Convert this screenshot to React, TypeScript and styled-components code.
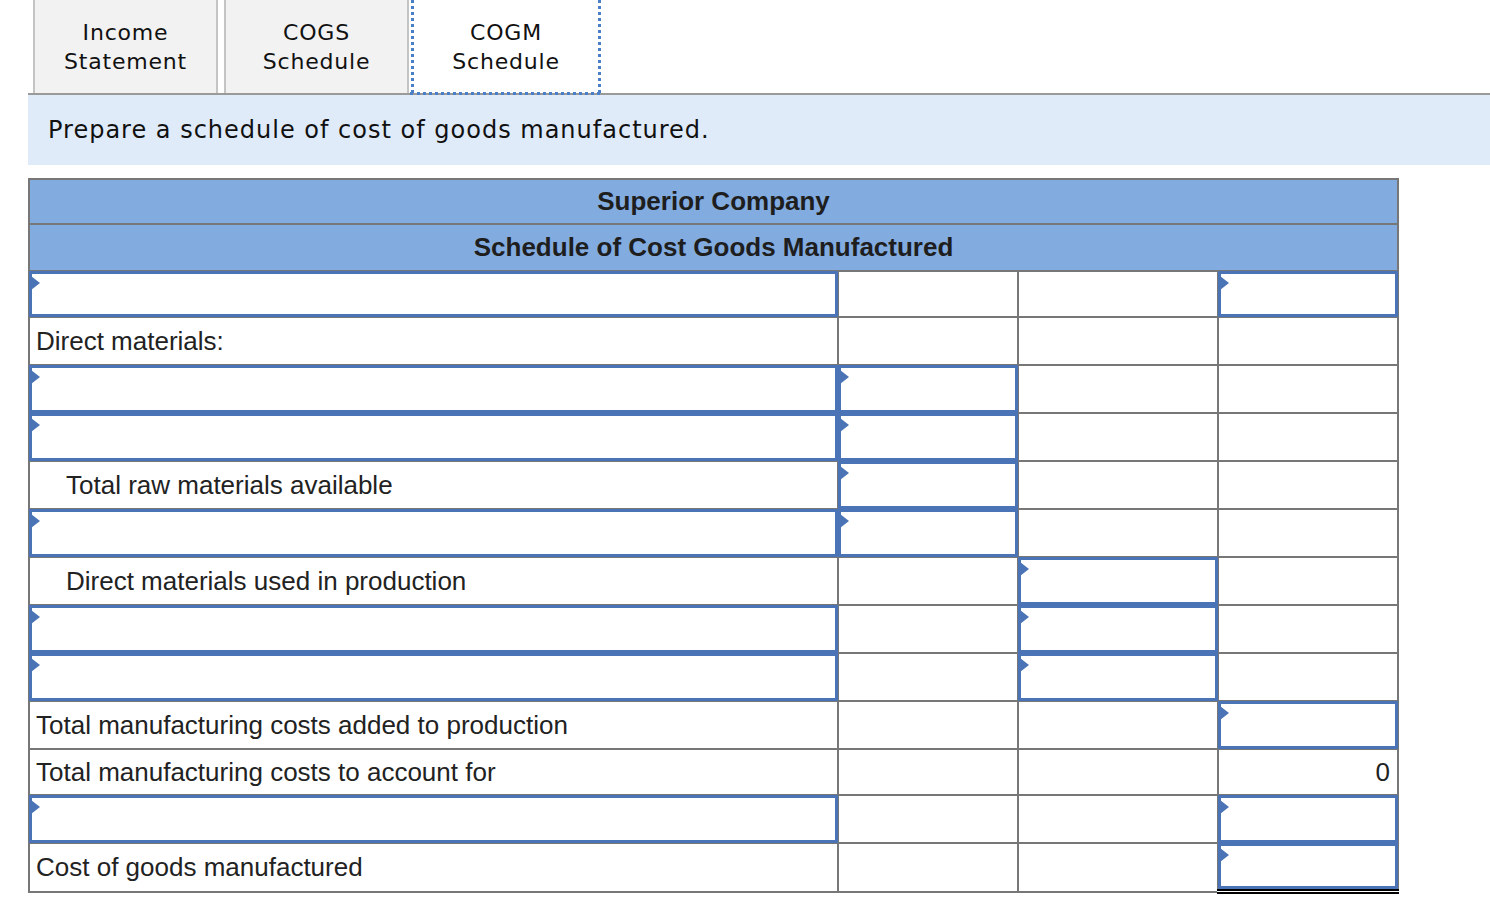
import React from 'react'
import styled, { createGlobalStyle, css } from 'styled-components'

const GlobalStyle = createGlobalStyle`
  html, body { margin: 0; padding: 0; background: #fff; }
  body { font-family: "Liberation Sans", Arial, sans-serif; color: #222; }
`

const Page = styled.div`
  width: 1490px;
  height: 910px;
  overflow: hidden;
`

const Header = styled.div`
  position: relative;
`

const TabBar = styled.div`
  display: flex;
  gap: 6px;
  padding-left: 33px;
  height: 93px;
  align-items: stretch;
`

const Tab = styled.div<{ $active?: boolean }>`
  width: ${p => (p.$active ? 190 : 185)}px;
  box-sizing: border-box;
  display: flex;
  align-items: center;
  justify-content: center;
  text-align: center;
  font-family: "DejaVu Sans", Verdana, sans-serif;
  font-size: 22px;
  letter-spacing: 0.8px;
  line-height: 29px;
  color: #111;
  padding-top: 1px;
  ${p =>
    p.$active
      ? css`
          background: #fff;
          border-left: 3px dotted #4a7fc8;
          border-right: 3px dotted #4a7fc8;
          margin-left: -4px;
        `
      : css`
          background: #f2f2f2;
          border-left: 2px solid #c4c4c4;
          border-right: 2px solid #c4c4c4;
        `}
`

const ActiveBottom = styled.div`
  position: absolute;
  left: 410px;
  top: 92px;
  width: 190px;
  border-top: 3px dotted #4a7fc8;
`

const Instruction = styled.div`
  margin-left: 28px;
  height: 70px;
  background: #dfebf8;
  border-top: 2px solid #9a9a9a;
  display: flex;
  align-items: center;
  padding-left: 20px;
  font-family: "DejaVu Sans", Verdana, sans-serif;
  font-size: 24px;
  letter-spacing: 1px;
  color: #111;
`

const TableWrap = styled.div`
  padding: 13px 0 0 28px;
`

const Sheet = styled.table`
  border-collapse: collapse;
  table-layout: fixed;
  width: 1370px;
  font-size: 26px;
  color: #222;
  border: 2px solid #777;
`

const HeadCell = styled.th<{ $h: number }>`
  background: #82abe0;
  border: 2px solid #777;
  height: ${p => p.$h}px;
  padding: 0;
  font-weight: bold;
  font-size: 26px;
  text-align: center;
  color: #1e1e1e;
`

const Cell = styled.td<{ $h: number; $indent?: boolean; $right?: boolean; $topRule?: boolean; $double?: boolean }>`
  border: 2px solid #777;
  height: ${p => p.$h}px;
  padding: 0 ${p => (p.$right ? '7px' : '0')} 0 ${p => (p.$indent ? '36px' : '6px')};
  text-align: ${p => (p.$right ? 'right' : 'left')};
  white-space: nowrap;
  position: relative;
  ${p => p.$topRule && css`border-top: 2px solid #000;`}
  ${p => p.$double && css`border-bottom: 5px double #000;`}
`

const Field = styled.div<{ $double?: boolean }>`
  position: absolute;
  inset: -1px;
  ${p => p.$double && css`bottom: 0;`}
  border: 3px solid #4a74b6;
  background: #fff;
  &::before {
    content: '';
    position: absolute;
    left: -1px;
    top: 2px;
    border-top: 7px solid transparent;
    border-bottom: 7px solid transparent;
    border-left: 9px solid #4a74b6;
  }
`

type C = { input?: boolean; text?: string; indent?: boolean; right?: boolean; top?: boolean; dbl?: boolean }
type Row = { h: number; cells: [C, C, C, C] }

const E: C = {}
const I: C = { input: true }

const rows: Row[] = [
  { h: 44, cells: [I, E, E, I] },
  { h: 46, cells: [{ text: 'Direct materials:' }, E, E, E] },
  { h: 46, cells: [I, I, E, E] },
  { h: 46, cells: [I, I, E, E] },
  { h: 46, cells: [{ text: 'Total raw materials available', indent: true }, { input: true, top: true }, E, E] },
  { h: 46, cells: [I, I, E, E] },
  { h: 46, cells: [{ text: 'Direct materials used in production', indent: true }, E, I, E] },
  { h: 46, cells: [I, E, I, E] },
  { h: 46, cells: [I, E, I, E] },
  { h: 46, cells: [{ text: 'Total manufacturing costs added to production' }, E, { top: true }, I] },
  { h: 44, cells: [{ text: 'Total manufacturing costs to account for' }, E, E, { text: '0', right: true, top: true }] },
  { h: 46, cells: [I, E, E, I] },
  { h: 45, cells: [{ text: 'Cost of goods manufactured' }, E, E, { input: true, dbl: true }] },
]

export default function App() {
  return (
    <Page>
      <GlobalStyle />
      <Header>
        <TabBar>
          <Tab>Income<br />Statement</Tab>
          <Tab>COGS<br />Schedule</Tab>
          <Tab $active>COGM<br />Schedule</Tab>
        </TabBar>
        <ActiveBottom />
      </Header>
      <Instruction>Prepare a schedule of cost of goods manufactured.</Instruction>
      <TableWrap>
        <Sheet>
          <colgroup>
            <col style={{ width: 809 }} />
            <col style={{ width: 180 }} />
            <col style={{ width: 200 }} />
            <col style={{ width: 180 }} />
          </colgroup>
          <thead>
            <tr><HeadCell colSpan={4} $h={43}>Superior Company</HeadCell></tr>
            <tr><HeadCell colSpan={4} $h={45}>Schedule of Cost Goods Manufactured</HeadCell></tr>
          </thead>
          <tbody>
            {rows.map((r, ri) => (
              <tr key={ri}>
                {r.cells.map((c, ci) => (
                  <Cell key={ci} $h={r.h} $indent={c.indent} $right={c.right} $topRule={c.top} $double={c.dbl}>
                    {c.input && <Field $double={c.dbl} />}
                    {c.text}
                  </Cell>
                ))}
              </tr>
            ))}
          </tbody>
        </Sheet>
      </TableWrap>
    </Page>
  )
}
